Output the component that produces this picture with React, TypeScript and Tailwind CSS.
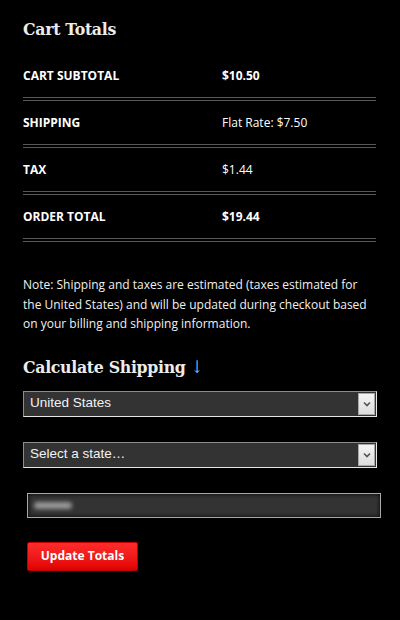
import React from "react";

const rows = [
  { label: "CART SUBTOTAL", value: "$10.50", bold: true },
  { label: "SHIPPING", value: "Flat Rate: $7.50", bold: false },
  { label: "TAX", value: "$1.44", bold: false },
  { label: "ORDER TOTAL", value: "$19.44", bold: true },
];

const heading = {
  fontFamily: '"DejaVu Serif", "Liberation Serif", serif',
  fontStretch: "condensed",
};

const FakeSelect: React.FC<{ text: string }> = ({ text }) => (
  <div className="flex h-[26px] w-[354px] items-stretch border border-t-[#8c8c8c] border-l-[#8c8c8c] border-b-[#e6e6e6] border-r-[#e6e6e6] bg-[#333] p-[1px]">
    <div
      className="flex flex-1 items-center pl-[5px] text-[13.5px] text-[#f2f2f2]"
      style={{ fontFamily: '"Liberation Sans", Arial, sans-serif' }}
    >
      {text}
    </div>
    <div className="flex w-[17px] items-center justify-center border border-[#a8a8a8] bg-gradient-to-b from-[#f4f4f4] to-[#dcdcdc]">
      <svg width="8" height="6" viewBox="0 0 8 6">
        <path d="M1 1.5 L4 4.5 L7 1.5" fill="none" stroke="#555" strokeWidth="1.6" />
      </svg>
    </div>
  </div>
);

const App: React.FC = () => {
  return (
    <div
      className="min-h-[620px] w-[400px] bg-black pl-[23px] pr-[24px] pt-[16px] text-white"
      style={{ fontFamily: '"Open Sans", "Noto Sans", sans-serif' }}
    >
      {/* Cart totals */}
      <h2 className="text-[17.5px] font-bold leading-[26px] tracking-[-0.3px] text-[#ececec]" style={heading}>
        Cart Totals
      </h2>

      <div className="mt-[12px]">
        {rows.map((r) => (
          <div key={r.label}>
            <div className="flex h-[43px] items-center">
              <div className="w-[199px] text-[12px] font-bold">{r.label}</div>
              <div className={`text-[12px] ${r.bold ? "font-bold" : ""}`}>{r.value}</div>
            </div>
            <div className="h-[4px] border-y border-[#585858]" />
          </div>
        ))}
      </div>

      <p className="mt-[33px] text-[12px] leading-[19.5px] text-[#f0f0f0]">
        Note: Shipping and taxes are estimated (taxes estimated for the United
        States) and will be updated during checkout based on your billing and
        shipping information.
      </p>

      {/* Shipping calculator */}
      <h2 className="mt-[20px] text-[17.5px] font-bold leading-[26px] tracking-[-0.3px] text-[#ececec]" style={heading}>
        Calculate Shipping<span className="ml-[5px] font-normal text-[#6fa8dc]">↓</span>
      </h2>

      <div className="mt-[11px]">
        <FakeSelect text="United States" />
      </div>
      <div className="mt-[25px]">
        <FakeSelect text="Select a state…" />
      </div>

      <div className="mt-[25px] pl-[4px]">
        <div className="flex h-[25px] w-[354px] items-center border border-[#a9a9a9] bg-[#333] pl-[6px] shadow-[inset_0_0_4px_#000]">
          <div className="h-[7px] w-[38px] rounded-full bg-[#9a9a9a] blur-[2px]" />
        </div>
      </div>

      <div className="mt-[24px] pl-[4px]">
        <button className="h-[29px] w-[111px] rounded-[2px] border border-[#c00000] bg-gradient-to-b from-[#ff2a2a] to-[#e00000] text-[12px] font-bold text-white">
          Update Totals
        </button>
      </div>
    </div>
  );
};

export default App;
